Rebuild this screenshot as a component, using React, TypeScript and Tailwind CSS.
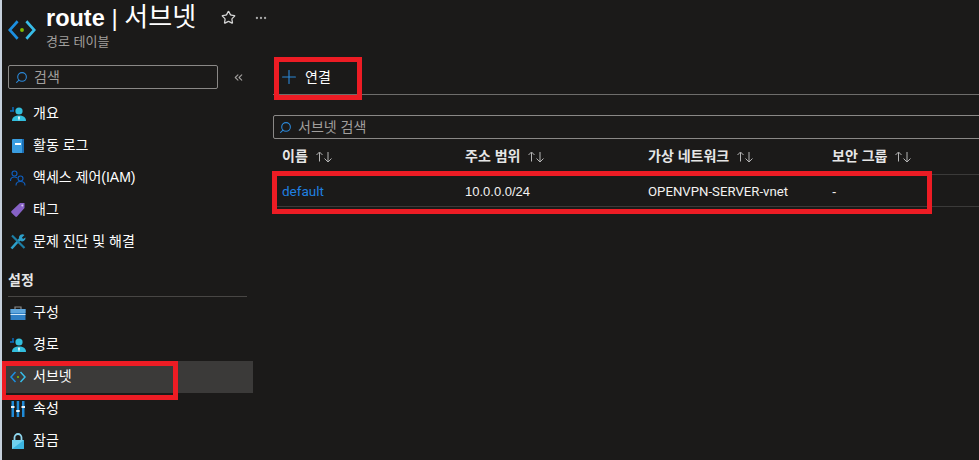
import type { ReactNode } from 'react'
import { Plus, Search, Star, Ellipsis, ChevronsLeft } from 'lucide-react'

const KR = { fontFamily: '"Liberation Sans", "Noto Sans CJK KR", sans-serif' }

const PersonIcon = () => (
  <svg width="16" height="16" viewBox="0 0 16 16">
    <circle cx="9" cy="5" r="3.6" fill="#32bedd" />
    <path d="M2 15c0-4 3-5.5 7-5.5s7 1.500 7 5.500z" fill="#32bedd" />
    <path d="M9 10l-1 1.500 1 3.500 1-3.500z" fill="#fff" />
    <path d="M0 5h4M3 1v4" stroke="#0a6ec4" strokeWidth="1.400" fill="none" />
  </svg>
)

const LogIcon = () => (
  <svg width="14" height="16" viewBox="0 0 14 16">
    <rect x="1" y="1" width="12" height="14" rx="1" fill="#3a9de0" />
    <rect x="11" y="1" width="2" height="14" fill="#1b6fb5" />
    <rect x="4" y="5" width="6" height="2" fill="#fff" />
  </svg>
)

const IamIcon = () => (
  <svg width="16" height="16" viewBox="0 0 16 16" fill="none" stroke="#0f5fc0" strokeWidth="1.100">
    <circle cx="4.500" cy="3.500" r="2.500" />
    <path d="M0.500 11c0-2.500 1.500-4 4-4 1 0 2 .3 2.500 1" />
    <circle cx="10.500" cy="8.500" r="2.500" />
    <path d="M6 15.500c0-2.500 1.800-4 4.500-4s4.500 1.500 4.500 4" />
  </svg>
)

const TagIcon = () => (
  <svg width="16" height="16" viewBox="0 0 16 16">
    <path d="M10 1h4.500v5L7 14.500a1.200 1.200 0 0 1-1.700 0L1.500 10.800a1.200 1.200 0 0 1 0-1.700z" fill="#8661c5" />
    <circle cx="12.300" cy="3.600" r="1" fill="#d9c8f2" />
  </svg>
)

const WrenchIcon = () => (
  <svg width="16" height="16" viewBox="0 0 16 16">
    <path d="M1.500 14.500L10 5" stroke="#2d9fc9" strokeWidth="2.600" />
    <path d="M9 4.500A3.500 3.500 0 0 1 14.500 1L12 3.500l1 1.500 2.500-1.500A3.500 3.500 0 0 1 10.500 7z" fill="#2d9fc9" />
    <path d="M2 1.500L14.500 14" stroke="#1d7ea6" strokeWidth="2.200" />
  </svg>
)

const BriefcaseIcon = () => (
  <svg width="16" height="14" viewBox="0 0 16 14">
    <path d="M5 3V1h6v2" fill="none" stroke="#8a8a8a" strokeWidth="1.200" />
    <rect x="0.500" y="3" width="15" height="11" fill="#2f7fc4" />
    <rect x="0.500" y="3" width="15" height="4" fill="#5ea6dd" />
    <rect x="0.500" y="8" width="15" height="1" fill="#cfe6f7" />
  </svg>
)

const SubnetIcon = ({ size = 16 }: { size?: number }) => (
  <svg width={size} height={size} viewBox="0 0 16 16" fill="none" strokeWidth="1.500">
    <path d="M5.500 3L1 8l4.500 5" stroke="#1c8fe0" />
    <path d="M10.500 3L15 8l-4.500 5" stroke="#38bde8" />
    <circle cx="8" cy="8" r="1.100" fill="#7fba00" stroke="none" />
  </svg>
)

const PropsIcon = () => (
  <svg width="14" height="16" viewBox="0 0 14 16">
    <rect x="0.500" y="0" width="2.500" height="16" fill="#1f8ad6" />
    <rect x="5.700" y="0" width="2.500" height="16" fill="#1f8ad6" />
    <rect x="11" y="0" width="2.500" height="16" fill="#1f8ad6" />
    <rect x="0" y="5" width="3.500" height="2" fill="#e8f4fc" />
    <rect x="5.200" y="9" width="3.500" height="2" fill="#e8f4fc" />
    <rect x="10.500" y="5" width="3.500" height="2" fill="#e8f4fc" />
  </svg>
)

const LockIcon = () => (
  <svg width="14" height="16" viewBox="0 0 14 16">
    <path d="M3.500 7V4.500a3.500 3.500 0 0 1 7 0V7" fill="none" stroke="#8fd6ee" strokeWidth="1.800" />
    <rect x="1" y="7" width="12" height="9" rx="0.500" fill="#3cb4e0" />
    <path d="M1 7h12L1 16z" fill="#6fd0ee" />
  </svg>
)

const SortArrows = () => (
  <svg width="18" height="12" viewBox="0 0 18 12" fill="none" stroke="#b5b5b5" strokeWidth="1" className="ml-[7px]">
    <path d="M4.500 10.500V1.500M1.500 4l3-3 3 3" />
    <path d="M13 1v10M9.500 7.500l3.500 3.500 3.500-3.500" />
  </svg>
)

const NavItem = ({ icon, label, active }: { icon: ReactNode; label: string; active?: boolean }) => (
  <div className={`flex h-8 items-center pl-2 text-[14px] text-white ${active ? 'bg-[#3b3a39]' : ''}`}>
    <span className="flex w-4 justify-center">{icon}</span>
    <span className="ml-[7px] pb-[1px]">{label}</span>
  </div>
)

const HeaderCell = ({ label, className }: { label: string; className: string }) => (
  <div className={`flex items-center text-[14px] font-bold text-[#e6e6e6] ${className}`}>
    <span>{label}</span>
    <SortArrows />
  </div>
)

export default function App() {
  return (
    <div
      className="relative flex h-[460px] w-[979px] overflow-hidden border-l-2 border-[#c7d0dc] bg-[#1b1a19] text-white"
      style={KR}
    >
      <div className="w-[251px] shrink-0">
        <div className="flex h-[53px] pl-[6px] pt-[1px]">
          <div className="pt-[15px]">
            <SubnetIcon size={28} />
          </div>
          <div className="ml-[10px]">
            <div className="flex items-center">
              <span className="text-[24px] leading-[32px] whitespace-nowrap">
                <span className="text-[23.500px] font-semibold">route</span> | <span className="text-[26px] font-normal">서브넷</span>
              </span>
              <Star size={15} className="ml-[25px] text-[#d6d6d6]" />
              <Ellipsis size={14} className="ml-[18px] text-[#a8a8a8]" />
            </div>
            <div className="text-[13px] leading-[16px] text-[#a19f9d]">경로 테이블</div>
          </div>
        </div>
        <div className="mt-[12px] flex items-center">
          <div className="ml-[6px] flex h-[24px] w-[210px] items-center rounded-[2px] border border-[#8a8886] pl-[6px] text-[14px] text-[#a19f9d]">
            <Search size={13} className="-scale-x-100 text-[#2b88d8]" />
            <span className="ml-[6px]">검색</span>
          </div>
          <ChevronsLeft size={13} className="ml-[14px] text-[#a19f9d]" />
        </div>
        <div className="mt-[9px]">
          <NavItem icon={<PersonIcon />} label="개요" />
          <NavItem icon={<LogIcon />} label="활동 로그" />
          <NavItem icon={<IamIcon />} label="액세스 제어(IAM)" />
          <NavItem icon={<TagIcon />} label="태그" />
          <NavItem icon={<WrenchIcon />} label="문제 진단 및 해결" />
        </div>
        <div className="mx-[6px] mt-[7px] h-[32px] border-b border-[#484644] pt-[6px] text-[14px] leading-[18px] font-bold text-[#e6e6e6]">
          설정
        </div>
        <div>
          <NavItem icon={<BriefcaseIcon />} label="구성" />
          <NavItem icon={<PersonIcon />} label="경로" />
          <NavItem icon={<SubnetIcon />} label="서브넷" active />
          <NavItem icon={<PropsIcon />} label="속성" />
          <NavItem icon={<LockIcon />} label="잠금" />
        </div>
      </div>

      <div className="ml-[20px] min-w-0 flex-1 pt-[62px]">
        <div className="flex h-[33px] items-start border-b border-[#6e6d6b]">
          <div className="flex h-[29px] items-center text-[14px]">
            <Plus size={22} strokeWidth={1.200} className="ml-[5px] text-[#2b88d8]" />
            <span className="ml-[5px] pt-[1px]">연결</span>
          </div>
        </div>
        <div className="mt-[20px] mr-[-2px] flex h-[24px] items-center rounded-[2px] border border-[#8a8886] pl-[5px] text-[14px] text-[#a19f9d]">
          <Search size={13} className="-scale-x-100 text-[#2b88d8]" />
          <span className="ml-[6px]">서브넷 검색</span>
        </div>
        <div className="flex h-[36px] items-center border-b border-[#3b3a39] pl-[9px]">
          <HeaderCell label="이름" className="w-[183px]" />
          <HeaderCell label="주소 범위" className="w-[183px]" />
          <HeaderCell label="가상 네트워크" className="w-[184px]" />
          <HeaderCell label="보안 그룹" className="w-[140px]" />
        </div>
        <div className="flex h-[32px] items-center border-b border-[#3b3a39] pt-[2px] pl-[9px] text-[13px] text-[#f3f2f1]">
          <div className="w-[183px] text-[13.500px] text-[#1f80e0]" style={{ fontFamily: 'Roboto, sans-serif' }}>default</div>
          <div className="w-[183px]">10.0.0.0/24</div>
          <div className="w-[184px] text-[13.200px]" style={{ fontFamily: 'Roboto, sans-serif' }}>OPENVPN-SERVER-vnet</div>
          <div>-</div>
        </div>
      </div>

      {/* red annotation boxes */}
      <div className="absolute top-[361px] left-[-1px] h-[39px] w-[177px] border-[5px] border-[#ed1c24]" />
      <div className="absolute top-[57px] left-[272px] h-[43px] w-[88px] border-[5px] border-[#ed1c24]" />
      <div className="absolute top-[171px] left-[270px] h-[43px] w-[660px] border-[5px] border-[#ed1c24]" />
    </div>
  )
}
